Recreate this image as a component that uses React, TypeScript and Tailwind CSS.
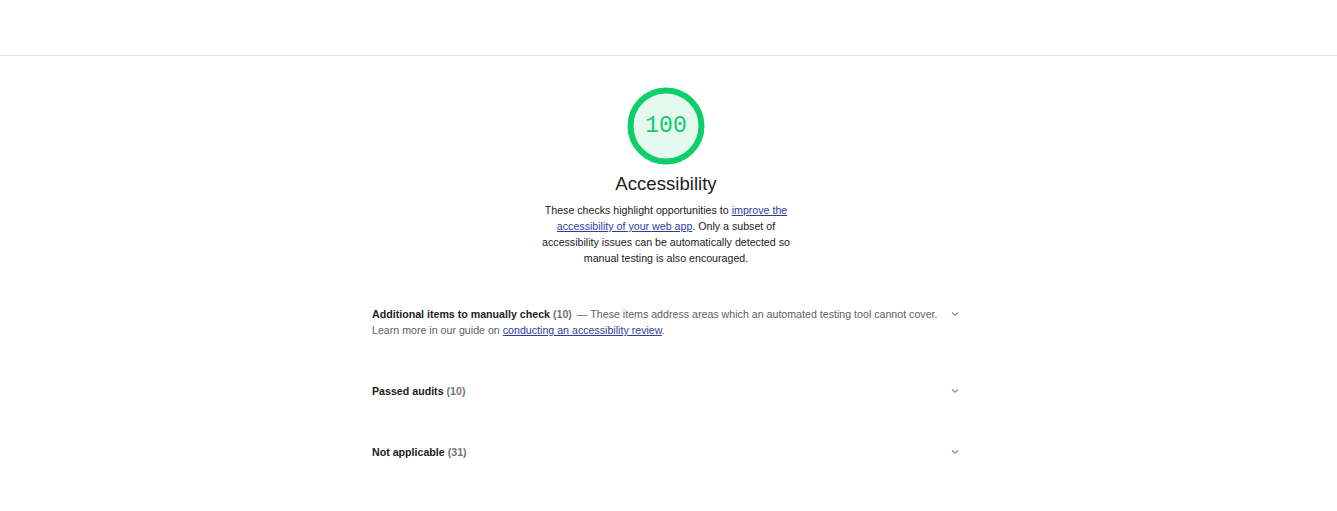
import React from 'react';

const font = { fontFamily: '"Liberation Sans", Arial, sans-serif' };

function Gauge({ score }: { score: number }) {
  return (
    <div className="relative w-[78px] h-[78px]">
      <svg viewBox="0 0 78 78" className="w-full h-full">
        <circle cx="39" cy="39" r="35.5" fill="#e6f9ef" stroke="#0cce6b" strokeWidth="6" />
      </svg>
      <div
        className="absolute inset-0 flex items-center justify-center text-[23px] text-[#0cce6b]"
        style={{ fontFamily: '"Liberation Mono", "DejaVu Sans Mono", monospace' }}
      >
        {score}
      </div>
    </div>
  );
}

function Chevron() {
  return (
    <svg width="10" height="6" viewBox="0 0 10 6" className="shrink-0 mt-[5px]">
      <path d="M2 1.5 L5 4.2 L8 1.5" fill="none" stroke="#8a8a8a" strokeWidth="1.2" />
    </svg>
  );
}

function Group({ title, count, children }: { title: string; count: number; children?: React.ReactNode }) {
  return (
    <div className="flex items-start justify-between gap-[6px] text-[10.65px] leading-4">
      <div className="flex-1 text-[#616161]">
        <span className="font-bold text-[#212121]">{title}</span>{' '}
        <span className="font-bold text-[#757575]">({count})</span>
        {children}
      </div>
      <Chevron />
    </div>
  );
}

export default function App() {
  return (
    <div className="min-h-[511px] bg-white" style={font}>
      <div className="h-[56px] border-b border-[#e0e0e0]" />
      <div className="flex flex-col items-center pt-[31px] pr-[5px]">
        <Gauge score={100} />
        <h2 className="mt-[7px] text-[18.6px] leading-6 text-[#212121]">Accessibility</h2>
        <p className="mt-[6px] w-[256px] text-center text-[10.65px] leading-4 text-[#212121]">
          These checks highlight opportunities to{' '}
          <a href="#" className="underline text-[#2f3d9c]">improve the accessibility of your web app</a>. Only a
          subset of accessibility issues can be automatically detected so manual testing is also encouraged.
        </p>
        <div className="mt-[40px] w-[588px] flex flex-col gap-[45px]">
          <Group title="Additional items to manually check" count={10}>
            <span className="ml-[5px]">
              — These items address areas which an automated testing tool cannot cover. Learn more in our guide on{' '}
              <a href="#" className="underline text-[#2f3d9c]">conducting an accessibility review</a>.
            </span>
          </Group>
          <Group title="Passed audits" count={10} />
          <Group title="Not applicable" count={31} />
        </div>
      </div>
    </div>
  );
}
